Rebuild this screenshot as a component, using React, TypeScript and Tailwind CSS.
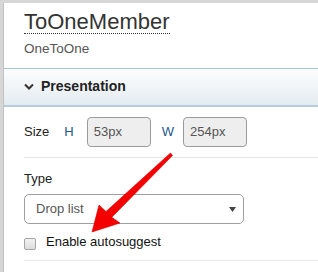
import React from "react";

export default function App() {
  return (
    <div className="relative w-[318px] h-[272px] overflow-hidden bg-[#d6d6d6] pt-[3px] pl-[3px] font-['Liberation_Sans',Arial,sans-serif]">
      <div className="h-full bg-white border-l border-[#c2c2c2]">
        <div className="h-[65px] pl-[20px] pt-[8px]">
          <div className="flex">
            <span className="text-[22px] leading-[22px] text-[#333] border-b border-dotted border-[#333]">
              ToOneMember
            </span>
          </div>
          <div className="mt-[7px] text-[13.5px] leading-[16px] text-[#555]">OneToOne</div>
        </div>
        <div className="h-[39px] border-t border-b-2 border-t-[#a9c6d6] border-b-[#b3cddd] bg-gradient-to-b from-[#fcfdfe] to-[#e4ebf0] pl-[20px] pt-[9px] flex items-start">
          <div className="flex items-center h-[16px]">
            <svg width="10" height="7" viewBox="0 0 10 7" className="block">
              <path d="M1 1.5 L5 5.5 L9 1.5" fill="none" stroke="#333" strokeWidth="2" />
            </svg>
            <span className="ml-[7px] text-[14px] leading-[16px] font-bold text-[#222]">Presentation</span>
          </div>
        </div>
        <div className="pl-[20px]">
          <div className="mt-[10px] h-[30px] flex items-center text-[13px] leading-[16px]">
            <span className="text-[#222]">Size</span>
            <span className="ml-[15px] text-[#24588c]">H</span>
            <div className="ml-[13px] w-[64px] h-[30px] rounded-[4px] border border-[#9a9a9a] bg-[#eeeeee] pl-[6px] flex items-center text-[#555]">
              53px
            </div>
            <span className="ml-[11px] text-[#24588c]">W</span>
            <div className="ml-[9px] w-[64px] h-[30px] rounded-[4px] border border-[#9a9a9a] bg-[#eeeeee] pl-[6px] flex items-center text-[#555]">
              254px
            </div>
          </div>
          <div className="mt-[10px] h-px bg-[#e6e6e6]" />
          <div className="mt-[13px] text-[13px] leading-[16px] text-[#222]">Type</div>
          <div className="mt-[7px] w-[220px] h-[30px] rounded-[5px] border border-[#a0a0a0] bg-white flex items-center justify-between pl-[11px] pr-[7px] text-[13px] text-[#555]">
            <span>Drop list</span>
            <svg width="7" height="5" viewBox="0 0 7 5" className="block">
              <path d="M0 0 H7 L3.5 5 Z" fill="#444" />
            </svg>
          </div>
          <div className="mt-[10px] flex items-start">
            <div className="mt-[4px] w-[12px] h-[12px] rounded-[2px] border border-[#a5a5a5] bg-gradient-to-b from-[#f2f2f2] to-[#dcdcdc]" />
            <span className="ml-[10px] text-[13px] leading-[16px] text-[#111]">Enable autosuggest</span>
          </div>
          <div className="mt-[10px] h-px bg-[#e8e8e8]" />
        </div>
      </div>
      <svg
        className="absolute left-0 top-0 pointer-events-none"
        width="318"
        height="272"
        viewBox="0 0 318 272"
      >
        <polygon
          points="92,232 99,205 106,211.5 170.5,153 172.5,155.5 111.8,217.3 120,223"
          fill="#f40000"
          stroke="#d80000"
          strokeWidth="0.6"
          strokeLinejoin="round"
        />
      </svg>
    </div>
  );
}
